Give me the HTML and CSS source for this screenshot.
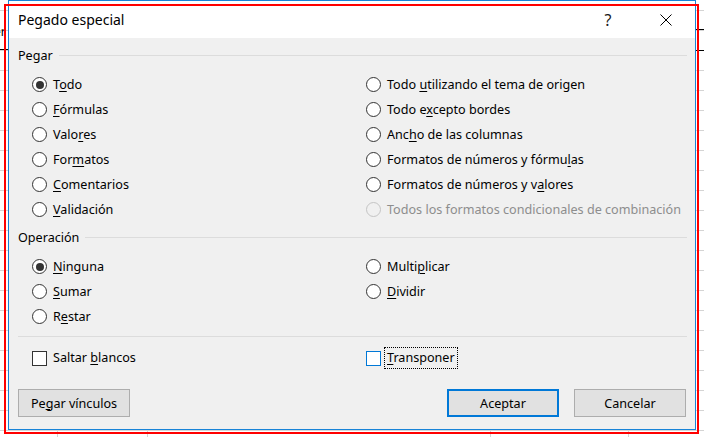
FILE: index.html
```html
<!DOCTYPE html>
<html lang="es">
<head>
<meta charset="utf-8">
<title>Pegado especial</title>
<link rel="stylesheet" href="styles.css">
</head>
<body>
<div class="screen">
  <div class="sheet-mark mark-left">er</div>
  <div class="dialog">
    <div class="titlebar">
      <span class="title">Pegado especial</span>
      <span class="help">?</span>
      <span class="close">
        <svg width="12" height="12" viewBox="0 0 12 12"><path d="M0.5 0.5 L11.5 11.5 M11.5 0.5 L0.5 11.5" stroke="#000" stroke-width="1" fill="none"/></svg>
      </span>
    </div>
    <div class="content">
      <div class="group-head"><span class="group-title">Pegar</span></div>
      <div class="options paste">
        <label class="opt"><span class="radio checked"></span><span>T<u>o</u>do</span></label>
        <label class="opt"><span class="radio"></span><span><u>F</u>órmulas</span></label>
        <label class="opt"><span class="radio"></span><span>Valo<u>r</u>es</span></label>
        <label class="opt"><span class="radio"></span><span>For<u>m</u>atos</span></label>
        <label class="opt"><span class="radio"></span><span><u>C</u>omentarios</span></label>
        <label class="opt"><span class="radio"></span><span><u>V</u>alidación</span></label>
        <label class="opt"><span class="radio"></span><span>Todo <u>u</u>tilizando el tema de origen</span></label>
        <label class="opt"><span class="radio"></span><span>Todo e<u>x</u>cepto bordes</span></label>
        <label class="opt"><span class="radio"></span><span>Anc<u>h</u>o de las columnas</span></label>
        <label class="opt"><span class="radio"></span><span>Formatos de números y fórmu<u>l</u>as</span></label>
        <label class="opt"><span class="radio"></span><span>Formatos de números y v<u>a</u>lores</span></label>
        <label class="opt disabled"><span class="radio"></span><span>Todos los formatos condicionales de combinación</span></label>
      </div>
      <div class="group-head"><span class="group-title">Operación</span></div>
      <div class="options operation">
        <label class="opt"><span class="radio checked"></span><span><u>N</u>inguna</span></label>
        <label class="opt"><span class="radio"></span><span><u>S</u>umar</span></label>
        <label class="opt"><span class="radio"></span><span>R<u>e</u>star</span></label>
        <label class="opt"><span class="radio"></span><span>Multi<u>p</u>licar</span></label>
        <label class="opt"><span class="radio"></span><span><u>D</u>ividir</span></label>
      </div>
      <div class="separator"></div>
      <div class="options checks">
        <label class="opt"><span class="check"></span><span>Saltar <u>b</u>lancos</span></label>
        <label class="opt"><span class="check focused"></span><span class="focus-label"><u>T</u>ransponer</span></label>
      </div>
      <div class="buttons">
        <button class="btn">Pe<u>g</u>ar vínculos</button>
        <span class="spacer"></span>
        <button class="btn default">Aceptar</button>
        <button class="btn">Cancelar</button>
      </div>
    </div>
  </div>
  <div class="highlight"></div>
</div>
</body>
</html>
```

FILE: styles.css
```css
* { box-sizing: border-box; }

html, body {
  margin: 0;
  padding: 0;
}

body {
  width: 704px;
  height: 437px;
  overflow: hidden;
  font-family: "Noto Sans", "Open Sans", sans-serif;
  font-size: 12.6px;
  color: #000;
  background-color: #fff;
}

.screen {
  position: relative;
  width: 704px;
  height: 437px;
  padding-left: 8px;
  background-color: #fff;
  background-image:
    linear-gradient(#000, #000),
    linear-gradient(#000, #000),
    linear-gradient(#000, #000),
    linear-gradient(to right, transparent 57px, #d4d4d4 57px, #d4d4d4 58px, transparent 58px,
      transparent 147px, #d4d4d4 147px, #d4d4d4 148px, transparent 148px,
      transparent 490px, #d4d4d4 490px, #d4d4d4 491px, transparent 491px,
      transparent 628px, #d4d4d4 628px, #d4d4d4 629px, transparent 629px),
    repeating-linear-gradient(to bottom, transparent 0, transparent 10px, #d4d4d4 10px, #d4d4d4 11px, transparent 11px, transparent 20px);
  background-size: 8px 1px, 8px 1px, 8px 1px, 100% 100%, 100% 100%;
  background-position: 0 49px, 696px 29px, 696px 50px, 0 0, 0 0;
  background-repeat: no-repeat, no-repeat, no-repeat, no-repeat, repeat;
}

.sheet-mark {
  position: absolute;
  font-size: 12px;
  line-height: 14px;
}

.mark-left {
  left: -6px;
  top: 25px;
}

.dialog {
  position: relative;
  width: 688px;
  height: 430px;
  border: 1px solid #1883d7;
  background: #f0f0f0;
  display: flex;
  flex-direction: column;
}

.titlebar {
  height: 37px;
  background: #fff;
  display: flex;
  align-items: center;
  padding-left: 9px;
  flex: none;
}

.title {
  flex: 1;
  font-size: 14px;
  line-height: 20px;
  padding-top: 1px;
}

.help {
  width: 30px;
  text-align: center;
  margin-right: 20px;
  font-size: 16px;
  color: #1a1a1a;
}

.close {
  width: 46px;
  margin-right: 6px;
  display: flex;
  justify-content: center;
  align-items: center;
}

.content {
  flex: 1;
  padding: 8px 9px 0 9px;
  display: flex;
  flex-direction: column;
}

.group-head {
  height: 20px;
  display: flex;
  align-items: center;
  line-height: 20px;
}

.group-head::after {
  content: "";
  flex: 1;
  height: 1px;
  background: #dcdcdc;
  margin-left: 6px;
  margin-right: -1px;
  margin-top: -1px;
}

.options {
  display: grid;
  grid-auto-flow: column;
  grid-template-columns: 334px 1fr;
  margin-left: 14px;
  margin-top: 6px;
}

.paste {
  grid-template-rows: repeat(6, 25px);
  margin-bottom: 6px;
}

.operation {
  grid-template-rows: repeat(3, 25px);
}

.opt {
  display: flex;
  align-items: center;
  gap: 6px;
  line-height: 16px;
  white-space: nowrap;
}

.opt u {
  text-decoration-thickness: 1px;
  text-underline-offset: 2px;
}

.radio {
  width: 15px;
  height: 15px;
  border-radius: 50%;
  border: 1px solid #333;
  background: #fff;
  flex: none;
  display: flex;
  align-items: center;
  justify-content: center;
}

.radio.checked::after {
  content: "";
  width: 8px;
  height: 8px;
  border-radius: 50%;
  background: #333;
}

.disabled {
  color: #8d8d8d;
}

.disabled .radio {
  border-color: #c4c4c4;
  background: #f0f0f0;
}

.separator {
  height: 1px;
  background: #dcdcdc;
  margin-top: 7px;
  margin-right: -1px;
}

.checks {
  grid-template-rows: 20px;
  margin-top: 11px;
}

.check {
  width: 15px;
  height: 15px;
  border: 1px solid #333;
  background: #fff;
  flex: none;
}

.check.focused {
  border-color: #0078d7;
}

.focus-label {
  outline: 1px dotted #000;
  padding: 2px 2px;
  margin-left: -2px;
  line-height: 16px;
}

.buttons {
  display: flex;
  align-items: center;
  margin-top: 21px;
  gap: 15px;
}

.spacer {
  flex: 1;
}

.btn {
  width: 112px;
  height: 28px;
  background: #e1e1e1;
  border: 1px solid #adadad;
  font-family: "Noto Sans", "Open Sans", sans-serif;
  font-size: 12.6px;
  color: #000;
  padding: 0;
  margin: 0;
}

.btn.default {
  border: 2px solid #0078d7;
}

.highlight {
  position: absolute;
  left: 4px;
  top: 4px;
  width: 695px;
  height: 430px;
  border: 2px solid #ff0000;
  pointer-events: none;
}
```
